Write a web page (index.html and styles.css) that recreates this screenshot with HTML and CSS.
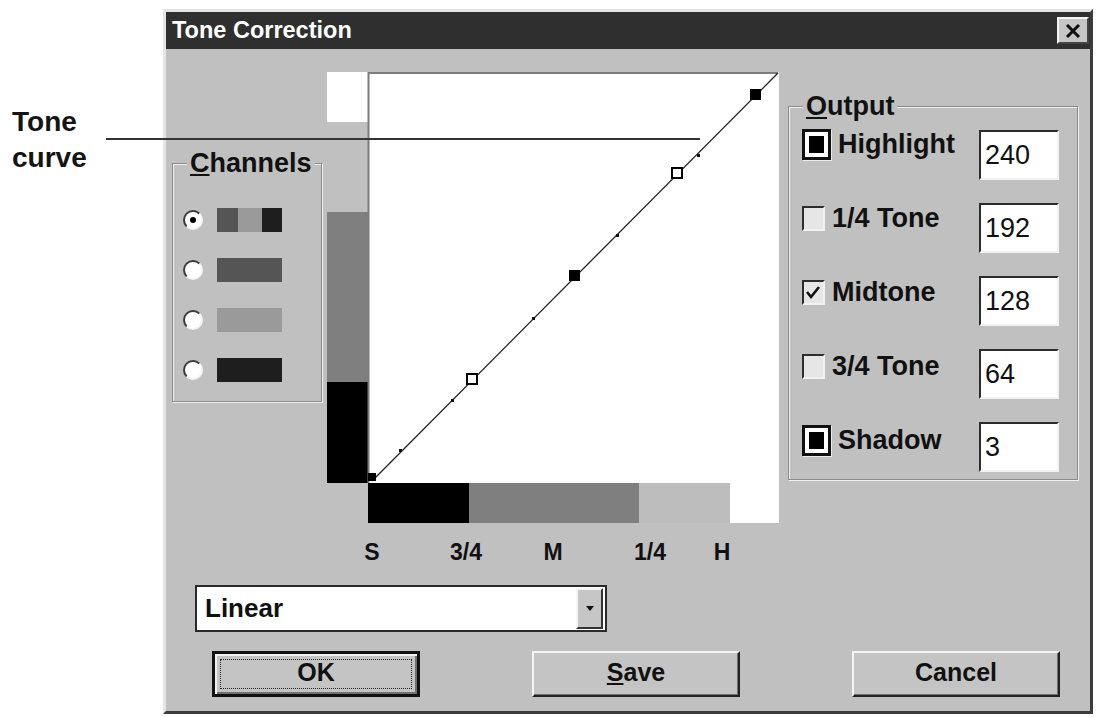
FILE: index.html
```html
<!DOCTYPE html>
<html lang="en">
<head>
  <meta charset="UTF-8" />
  <title>Tone Correction</title>
  <link rel="stylesheet" href="styles.css">
</head>
<body>
  <div class="page">
    <div class="callout">Tone<br>curve</div>
    <div class="callout-line"></div>

    <div class="dialog">
      <div class="titlebar">
        <span>Tone Correction</span>
        <span class="close">
          <svg width="16" height="14" viewBox="0 0 16 14"><path d="M2 1 L14 13 M14 1 L2 13" stroke="#111" stroke-width="3"/></svg>
        </span>
      </div>

      <div class="top">
        <!-- Channels -->
        <div class="group channels">
          <span class="group-label"><u>C</u>hannels</span>
          <div class="channel-row">
            <span class="radio on"></span>
            <span class="swatch all"><i class="c-dark"></i><i class="c-mid"></i><i class="c-black"></i></span>
          </div>
          <div class="channel-row">
            <span class="radio"></span>
            <span class="swatch c-dark"></span>
          </div>
          <div class="channel-row">
            <span class="radio"></span>
            <span class="swatch c-mid"></span>
          </div>
          <div class="channel-row">
            <span class="radio"></span>
            <span class="swatch c-black"></span>
          </div>
        </div>

        <!-- Tone curve -->
        <svg class="chart" width="452" height="495" viewBox="0 0 452 495">
          <rect x="0" y="0" width="41" height="50" fill="#fff"/>
          <rect x="0" y="140" width="41" height="170" fill="#7f7f7f"/>
          <rect x="0" y="310" width="41" height="101" fill="#000"/>
          <rect x="41" y="0" width="411" height="411" fill="#fff"/>
          <path d="M41.5 411 V1 H451" stroke="#7c7c7c" stroke-width="2" fill="none"/>
          <rect x="41" y="411" width="101" height="40" fill="#000"/>
          <rect x="142" y="411" width="170" height="40" fill="#7f7f7f"/>
          <rect x="312" y="411" width="91" height="40" fill="#bdbdbd"/>
          <rect x="403" y="411" width="49" height="40" fill="#fff"/>
          <line x1="45" y1="409" x2="451" y2="1" stroke="#222" stroke-width="1.3"/>
          <g fill="#111">
            <rect x="72" y="377" width="3" height="3"/>
            <rect x="124" y="327" width="3" height="3"/>
            <rect x="205" y="245" width="3" height="3"/>
            <rect x="289" y="162" width="3" height="3"/>
            <rect x="370" y="82" width="3" height="3"/>
          </g>
          <rect x="41" y="401" width="8" height="8" fill="#000"/>
          <rect x="140" y="302" width="10" height="10" fill="#fff" stroke="#000" stroke-width="2"/>
          <rect x="242" y="198" width="11" height="11" fill="#000"/>
          <rect x="345" y="96" width="10" height="10" fill="#fff" stroke="#000" stroke-width="2"/>
          <rect x="423" y="17" width="11" height="11" fill="#000"/>
          <g class="axis">
            <text x="45" y="488">S</text>
            <text x="139" y="488">3/4</text>
            <text x="226" y="488">M</text>
            <text x="323" y="488">1/4</text>
            <text x="395" y="488">H</text>
          </g>
        </svg>

        <!-- Output -->
        <div class="group output">
          <span class="group-label"><u>O</u>utput</span>
          <div class="out-labels">
            <label class="out-item"><span class="mark"></span>Highlight</label>
            <label class="out-item"><span class="check"></span>1/4 Tone</label>
            <label class="out-item"><span class="check">
              <svg width="19" height="21" viewBox="0 0 19 21"><polyline points="3,10 7,15 15,5" fill="none" stroke="#111" stroke-width="2.6"/></svg>
            </span>Midtone</label>
            <label class="out-item"><span class="check"></span>3/4 Tone</label>
            <label class="out-item"><span class="mark"></span>Shadow</label>
          </div>
          <div class="out-values">
            <div class="field">240</div>
            <div class="field">192</div>
            <div class="field">128</div>
            <div class="field">64</div>
            <div class="field">3</div>
          </div>
        </div>
      </div>

      <div class="combo">
        <span class="combo-text">Linear</span>
        <span class="combo-btn">
          <svg width="8" height="5" viewBox="0 0 8 5"><path d="M0 0 H8 L4 5 Z" fill="#111"/></svg>
        </span>
      </div>

      <div class="buttons">
        <button class="btn default">OK</button>
        <button class="btn"><u>S</u>ave</button>
        <button class="btn">Cancel</button>
      </div>
    </div>
  </div>
</body>
</html>
```

FILE: styles.css
```css
body {
  margin: 0;
  background: #fff;
  font-family: "Liberation Sans", Arial, sans-serif;
  color: #111;
}

.page {
  position: relative;
  display: flex;
  align-items: flex-start;
  width: 1101px;
  height: 717px;
  padding: 9px 0 0 12px;
  box-sizing: border-box;
  overflow: hidden;
}

/* annotation left of the dialog */
.callout {
  width: 151px;
  margin-top: 95px;
  font-size: 28px;
  line-height: 36px;
  font-weight: bold;
  color: #141414;
}

.callout-line {
  position: absolute;
  left: 106px;
  top: 138px;
  width: 594px;
  height: 2px;
  background: #333;
  z-index: 2;
}

/* dialog window */
.dialog {
  width: 930px;
  height: 705px;
  box-sizing: border-box;
  border: 3px solid;
  border-color: #e4e4e4 #3c3c3c #3c3c3c #e4e4e4;
  background: #c0c0c0;
  display: flex;
  flex-direction: column;
}

.titlebar {
  height: 37px;
  background: #2f2f2f;
  color: #fff;
  font-size: 23.5px;
  font-weight: bold;
  display: flex;
  align-items: center;
  justify-content: space-between;
  padding: 0 1px 0 6px;
}

.close {
  width: 32px;
  height: 27px;
  box-sizing: border-box;
  background: #c6c6c6;
  border: 2px solid;
  border-color: #f4f4f4 #444 #444 #f4f4f4;
  display: flex;
  align-items: center;
  justify-content: center;
}

.top {
  display: flex;
  align-items: flex-start;
  margin-top: 23px;
}

/* group boxes */
.group {
  position: relative;
  box-sizing: border-box;
  border: 1px solid #8a8a8a;
  box-shadow: 1px 1px 0 #f0f0f0, inset 1px 1px 0 #f0f0f0;
}

.group-label {
  position: absolute;
  top: -15px;
  left: 14px;
  padding: 0 3px;
  background: #c0c0c0;
  font-size: 27px;
  line-height: 28px;
  font-weight: bold;
}

.channels {
  width: 150px;
  height: 239px;
  margin: 91px 0 0 6px;
  padding: 31px 0 0 10px;
}

.channel-row {
  display: flex;
  align-items: center;
  gap: 14px;
  height: 50px;
}

.radio {
  position: relative;
  width: 20px;
  height: 20px;
  box-sizing: border-box;
  border-radius: 50%;
  border: 2px solid;
  border-color: #3a3a3a #f4f4f4 #f4f4f4 #3a3a3a;
  background: #fff;
}

.radio.on::after {
  content: "";
  position: absolute;
  left: 5px;
  top: 5px;
  width: 6px;
  height: 6px;
  border-radius: 50%;
  background: #000;
}

.swatch {
  width: 65px;
  height: 24px;
}

.swatch.all {
  display: flex;
}

.swatch.all i:nth-child(1) { width: 21px; }
.swatch.all i:nth-child(2) { width: 24px; }
.swatch.all i:nth-child(3) { width: 20px; }

.c-dark { background: #555; }
.c-mid { background: #9a9a9a; }
.c-black { background: #1e1e1e; }

/* curve */
.chart {
  display: block;
  margin-left: 5px;
}

.axis text {
  font-family: "Liberation Sans", Arial, sans-serif;
  font-size: 23px;
  font-weight: bold;
  fill: #111;
  text-anchor: middle;
}

/* output box */
.output {
  width: 290px;
  height: 374px;
  margin: 34px 0 0 9px;
  display: flex;
  justify-content: space-between;
  padding: 0 18px 0 13px;
}

.out-labels {
  display: flex;
  flex-direction: column;
  gap: 42px;
  padding-top: 21px;
}

.out-item {
  display: flex;
  align-items: center;
  gap: 7px;
  height: 32px;
  font-size: 27px;
  font-weight: bold;
}

.mark {
  width: 29px;
  height: 31px;
  box-sizing: border-box;
  border: 3px solid #111;
  padding: 4px;
  background: #fff;
  box-shadow: 1px 1px 0 #ececec;
}

.mark::after {
  content: "";
  display: block;
  width: 100%;
  height: 100%;
  background: #000;
}

.check {
  width: 23px;
  height: 25px;
  box-sizing: border-box;
  border: 2px solid;
  border-color: #2c2c2c #f2f2f2 #f2f2f2 #2c2c2c;
  background: #e6e6e6;
}

.check svg {
  display: block;
}

.out-values {
  display: flex;
  flex-direction: column;
  gap: 23px;
  padding-top: 23px;
}

.field {
  width: 80px;
  height: 50px;
  box-sizing: border-box;
  border: 2px solid;
  border-color: #2c2c2c #f2f2f2 #f2f2f2 #2c2c2c;
  background: #fff;
  padding-left: 4px;
  font-size: 27px;
  line-height: 46px;
}

/* curve type */
.combo {
  width: 412px;
  height: 47px;
  margin: 18px 0 0 29px;
  box-sizing: border-box;
  border: 2px solid #2a2a2a;
  background: #fff;
  display: flex;
  align-items: center;
  justify-content: space-between;
  padding: 1px 2px 1px 8px;
}

.combo-text {
  font-size: 26px;
  font-weight: bold;
}

.combo-btn {
  width: 27px;
  height: 100%;
  box-sizing: border-box;
  background: #c6c6c6;
  border: 2px solid;
  border-color: #f4f4f4 #333 #333 #f4f4f4;
  display: flex;
  align-items: center;
  justify-content: center;
}

/* push buttons */
.buttons {
  display: flex;
  gap: 112px;
  margin: 19px 0 0 46px;
}

.btn {
  position: relative;
  width: 208px;
  height: 46px;
  box-sizing: border-box;
  background: #c4c4c4;
  border: 2px solid;
  border-color: #f4f4f4 #222 #222 #f4f4f4;
  box-shadow: inset -1px -1px 0 #707070;
  font-family: "Liberation Sans", Arial, sans-serif;
  font-size: 25px;
  font-weight: bold;
  color: #111;
  padding: 0 0 3px;
}

.btn.default {
  border: 3px solid #111;
  box-shadow: inset 2px 2px 0 #f0f0f0, inset -2px -2px 0 #707070;
}

.btn.default::after {
  content: "";
  position: absolute;
  left: 5px;
  top: 5px;
  right: 5px;
  bottom: 5px;
  border: 1px dotted #222;
}
```
